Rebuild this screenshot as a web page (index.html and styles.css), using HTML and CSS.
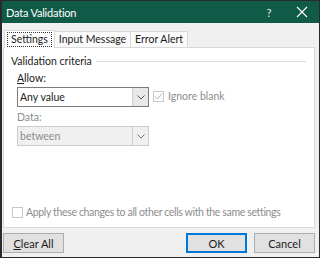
FILE: index.html
```html
<!DOCTYPE html>
<html>
<head>
<meta charset="utf-8">
<link rel="stylesheet" href="styles.css">
</head>
<body>
<div class="dialog">
  <div class="titlebar">
    <span class="title">Data Validation</span>
    <span class="tb-help">?</span>
    <span class="tb-close"><svg width="12" height="12" viewBox="0 0 12 12"><path d="M1 1 L11 11 M11 1 L1 11" stroke="#fff" stroke-width="1.1" fill="none"/></svg></span>
  </div>
  <div class="content">
    <div class="tabs">
      <div class="tab active"><span class="focus">Settings</span></div>
      <div class="tab">Input Message</div>
      <div class="tab">Error Alert</div>
    </div>
    <div class="panel">
      <div class="group-title"><span>Validation criteria</span><span class="rule"></span></div>
      <div class="row">
        <div class="field">
          <div class="label"><u>A</u>llow:</div>
          <div class="select"><span class="val">Any value</span><span class="arrow"><svg width="8" height="5" viewBox="0 0 8 5"><path d="M0.5 0.5 L4 4 L7.5 0.5" stroke="#555" fill="none"/></svg></span></div>
        </div>
        <div class="check-wrap">
          <span class="cbox disabled"><svg width="9" height="9" viewBox="0 0 9 9"><path d="M1 4.5 L3.5 7 L8 1.5" stroke="#b4b4b4" fill="none" stroke-width="1"/></svg></span>
          <span class="clabel dis">Ignore blank</span>
        </div>
      </div>
      <div class="field">
        <div class="label dis">Data:</div>
        <div class="select disabled"><span class="val">between</span><span class="arrow"><svg width="8" height="5" viewBox="0 0 8 5"><path d="M0.5 0.5 L4 4 L7.5 0.5" stroke="#777" fill="none"/></svg></span></div>
      </div>
      <div class="spacer"></div>
      <div class="apply">
        <span class="cbox disabled"></span>
        <span class="clabel dis apply-text">Apply these changes to all other cells with the same settings</span>
      </div>
    </div>
    <div class="buttons">
      <button class="btn"><u>C</u>lear All</button>
      <div class="right">
        <button class="btn default">OK</button>
        <button class="btn">Cancel</button>
      </div>
    </div>
  </div>
</div>
</body>
</html>
```
FILE: styles.css
```css
html, body {
  margin: 0;
  padding: 0;
}
body {
  width: 320px;
  height: 258px;
  overflow: hidden;
  font-family: Lato, "Noto Sans", sans-serif;
  font-size: 10.5px;
  color: #1a1a1a;
}
.dialog {
  width: 320px;
  height: 258px;
  box-sizing: border-box;
  border: 1px solid #2a2a2a;
  border-left-width: 2px;
  background: #f0f0f0;
  display: flex;
  flex-direction: column;
}
.titlebar {
  height: 22px;
  background: #0f5b47;
  color: #fff;
  display: flex;
  align-items: center;
  padding-left: 4px;
  flex: none;
}
.title {
  font-size: 11px;
  letter-spacing: -0.2px;
  flex: 1;
}
.tb-help {
  width: 20px;
  text-align: center;
  font-size: 11px;
  color: #e6efec;
  margin-right: 17px;
}
.tb-close {
  width: 12px;
  height: 12px;
  margin-right: 11px;
  display: flex;
}
.content {
  flex: 1;
  display: flex;
  flex-direction: column;
  padding: 7px 4px 4px 1px;
}
.tabs {
  display: flex;
  height: 17px;
  align-items: flex-end;
  padding-left: 3px;
}
.tab {
  height: 15px;
  padding: 0 4px;
  border: 1px solid #d9d9d9;
  border-bottom: none;
  background: #fafafa;
  display: flex;
  align-items: center;
  margin-right: -1px;
  line-height: 1;
}
.tab.active {
  height: 17px;
  background: #fff;
  padding: 0 2px;
  margin-left: -2px;
  position: relative;
  z-index: 1;
  margin-bottom: -1px;
}
.focus {
  border: 1px dotted #333;
  padding: 1px 3px;
}
.panel {
  flex: 1;
  background: #fff;
  border: 1px solid #d9d9d9;
  display: flex;
  flex-direction: column;
  padding: 6px 8px 8px 7px;
}
.group-title {
  display: flex;
  align-items: center;
  gap: 4px;
  height: 14px;
}
.rule {
  flex: 1;
  height: 1px;
  background: #dcdcdc;
}
.row {
  display: flex;
  align-items: flex-end;
}
.field {
  padding-left: 6px;
}
.label {
  margin-top: 3px;
  height: 15px;
  line-height: 15px;
}
.dis {
  color: #8d8d8d;
}
.select {
  width: 130px;
  height: 18px;
  border: 1px solid #7a7a7a;
  background: #fff;
  display: flex;
  align-items: center;
  margin-top: 1px;
}
.select.disabled {
  background: #f0f0f0;
  border-color: #cccccc;
  color: #8d8d8d;
}
.val {
  flex: 1;
  padding-left: 2px;
}
.arrow {
  width: 15px;
  height: 18px;
  border-left: 1px solid #cfcfcf;
  background: #e8e8e8;
  display: flex;
  align-items: center;
  justify-content: center;
}
.select.disabled .arrow {
  background: #f0f0f0;
}
.check-wrap {
  display: flex;
  align-items: center;
  margin-left: 4px;
  margin-bottom: 5px;
  gap: 4px;
}
.cbox {
  width: 9px;
  height: 9px;
  border: 1px solid #c8c8c8;
  background: #fff;
  display: flex;
  align-items: center;
  justify-content: center;
  flex: none;
}
.spacer {
  flex: 1;
}
.apply {
  display: flex;
  align-items: center;
  gap: 3px;
  padding-left: 1px;
  margin-bottom: 1px;
}
.apply-text {
  white-space: nowrap;
  letter-spacing: -0.35px;
}
.buttons {
  display: flex;
  justify-content: space-between;
  margin-top: 5px;
  height: 20px;
}
.right {
  display: flex;
  gap: 7px;
}
.btn {
  width: 61px;
  height: 20px;
  border: 1px solid #adadad;
  background: #e1e1e1;
  font-family: inherit;
  font-size: 11px;
  color: #1a1a1a;
  padding: 0;
}
.btn.default {
  border: 1px solid #0078d7;
  box-shadow: inset 0 0 0 1px #0078d7;
}
```
